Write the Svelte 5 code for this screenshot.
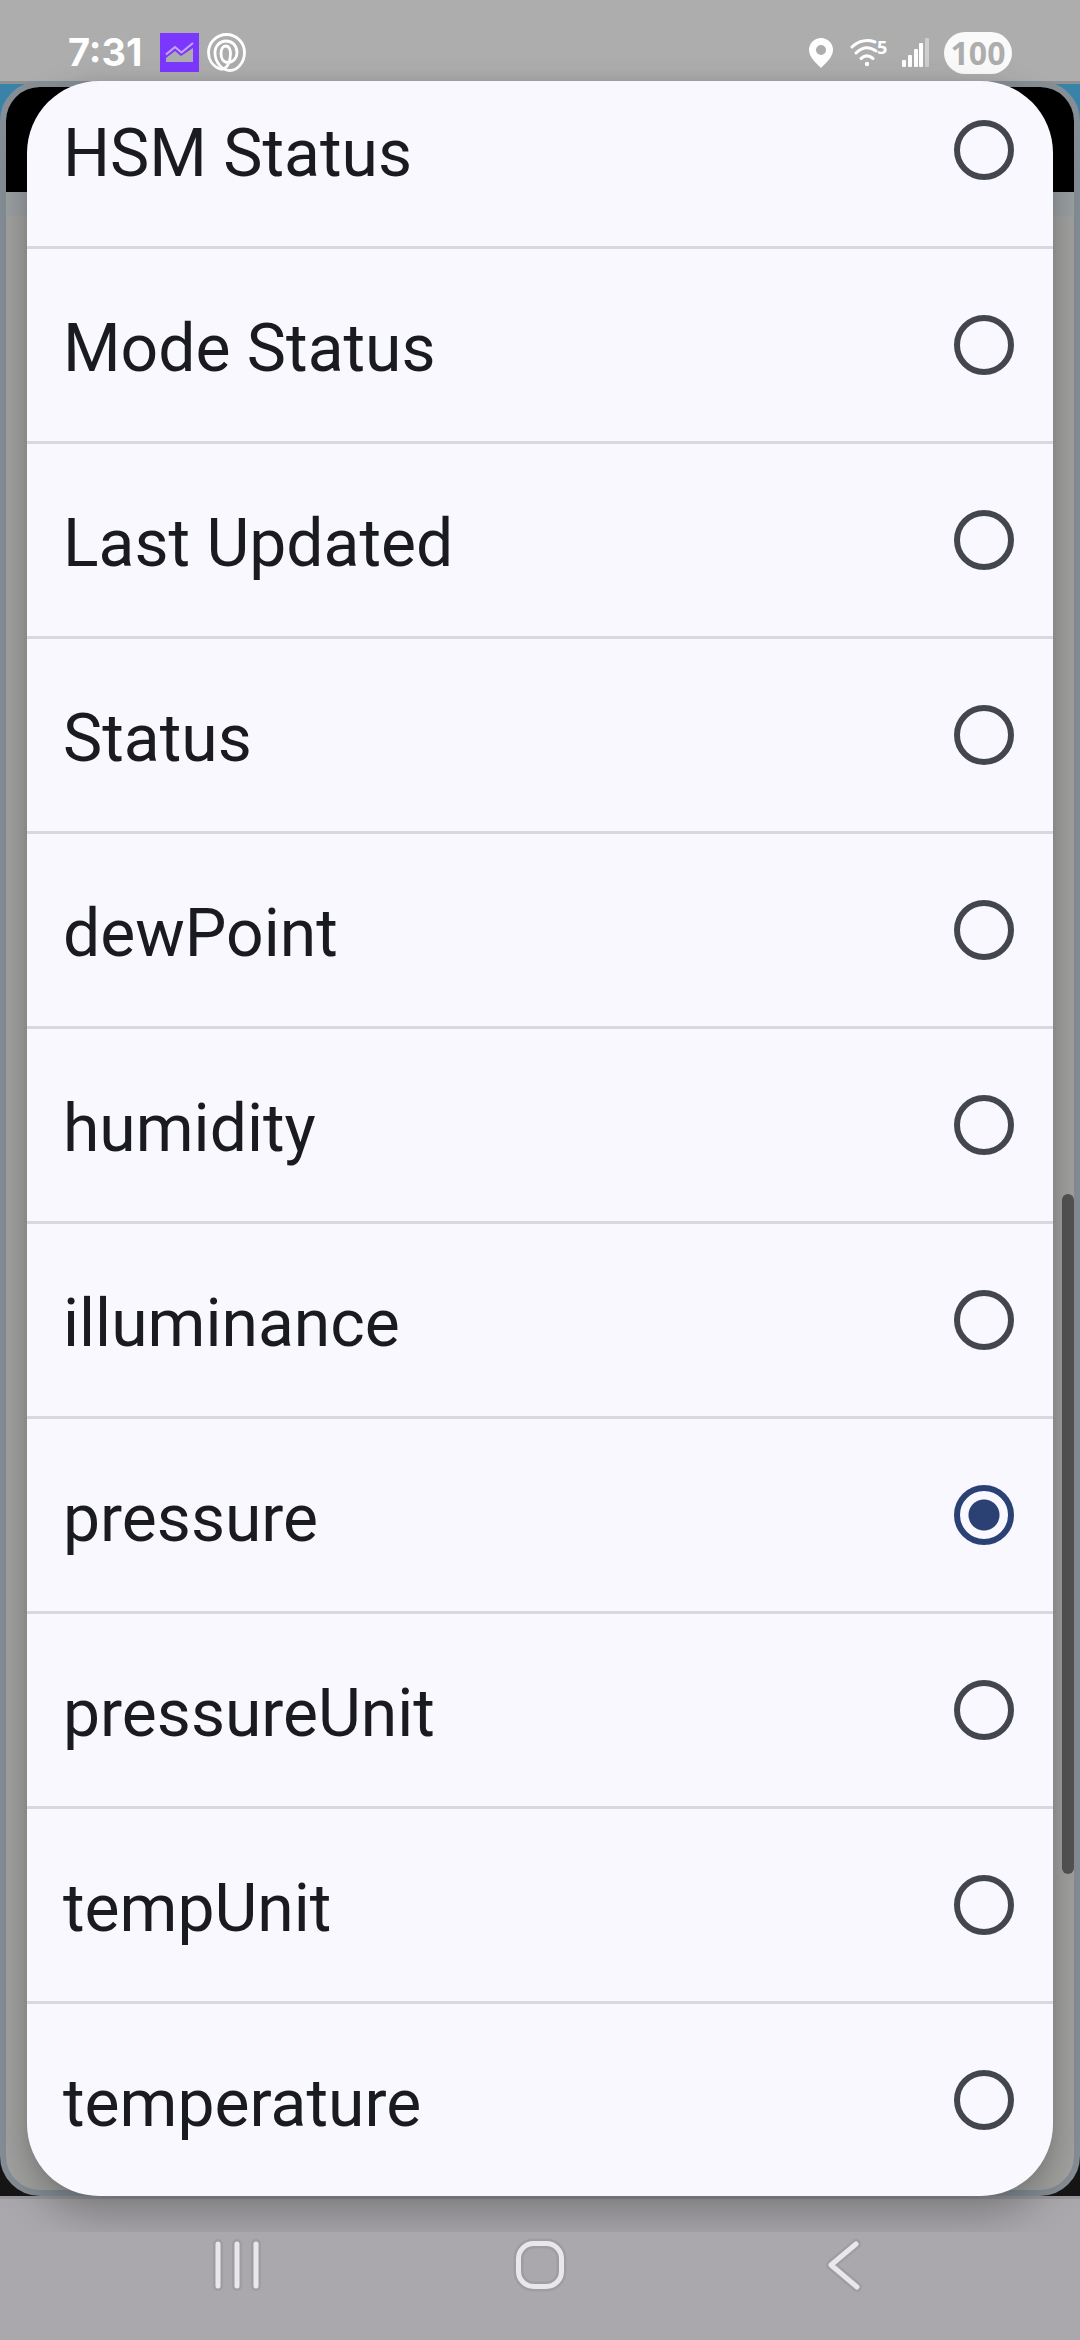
<script>
  const options = [
    'HSM Status',
    'Mode Status',
    'Last Updated',
    'Status',
    'dewPoint',
    'humidity',
    'illuminance',
    'pressure',
    'pressureUnit',
    'tempUnit',
    'temperature'
  ]

  let selected = $state('pressure')
</script>

<div class="screen">
  <header class="status">
    <div class="group">
      <span class="clock">7:31</span>
      <svg class="chart" width="39" height="39" viewBox="0 0 39 39">
        <rect width="39" height="39" fill="#7c37ff" />
        <path d="M6 29V25L15 18L21 23L33 15V29Z" fill="#adadad" />
        <path d="M6 21.5L15 14L21.5 19.5L33 10" fill="none" stroke="#c5a9ee" stroke-width="2" />
      </svg>
      <svg width="39" height="39" viewBox="0 0 39 39" fill="none" stroke="#fff" stroke-width="2.8">
        <path d="M13 36C5 33 1.5 26 1.5 19.500A18 18 0 0 1 37.500 19.500C37.500 30 30 37.500 23 37.500C14 37.500 8 28 8 20C8 12.500 13 8 19 8C25.500 8 30 13 30 19.500C30 25 26 29.500 21 29.500C16 29.500 14 25 14 20.500C14 16 16 13 18.700 13C22 13 23.500 17 23.500 21C23.500 28 20 37.500 13 36" />
      </svg>
    </div>
    <div class="group right">
      <svg class="pin" width="24" height="30" viewBox="0 0 24 30">
        <path fill="#fff" fill-rule="evenodd" d="M12 0A12 12 0 0 0 0 12C0 19 7 25 12 30C17 25 24 19 24 12A12 12 0 0 0 12 0ZM12 7A5 5 0 1 1 12 17A5 5 0 1 1 12 7Z" />
      </svg>
      <svg class="wifi" width="40" height="36" viewBox="0 -4 40 36" fill="none" stroke="#fff" stroke-width="3" stroke-linecap="round">
        <path d="M2 8C9 1 18 .5 25 3" />
        <path d="M6 14C12 8 19 7 26 12" />
        <path d="M11 19.500C15 16 19 16 23 19.500" />
        <circle cx="17" cy="25" r="2.200" fill="#fff" stroke="none" />
        <text x="27" y="15" class="band">5</text>
      </svg>
      <svg class="signal" width="28" height="30" viewBox="0 0 28 30" fill="#fff">
        <rect x="0" y="22" width="4" height="7" rx="1" />
        <rect x="6" y="17" width="4" height="12" rx="1" />
        <rect x="12" y="11" width="4" height="18" rx="1" />
        <rect x="17" y="5" width="4" height="24" rx="1" />
        <rect x="23" y="0" width="4" height="29" rx="1" opacity=".4" />
      </svg>
      <span class="battery">100</span>
    </div>
  </header>

  <div class="stage">
    <div class="page">
      <div class="page-header"></div>
      <div class="page-strip"></div>
      <div class="scrollbar"></div>
    </div>
    <div class="dialog">
      <div class="list" role="radiogroup" aria-label="Attribute">
        {#each options as option}
          <label class="option">
            <span>{option}</span>
            <input type="radio" name="attribute" value={option} bind:group={selected} />
          </label>
        {/each}
      </div>
    </div>
  </div>

  <nav class="navbar">
    <div class="buttons">
      <button aria-label="Recent apps">
        <svg width="60" height="60" viewBox="0 0 60 60" fill="none" stroke-linecap="round">
          <path class="halo" d="M11 9V51M30 9V51M49 9V51" />
          <path class="line" d="M11 9V51M30 9V51M49 9V51" />
        </svg>
      </button>
      <button aria-label="Home">
        <svg width="60" height="60" viewBox="0 0 60 60" fill="none">
          <rect class="halo" x="8.5" y="8.5" width="43" height="43" rx="15" />
          <rect class="line" x="8.5" y="8.5" width="43" height="43" rx="15" />
        </svg>
      </button>
      <button aria-label="Back">
        <svg width="60" height="60" viewBox="0 0 60 60" fill="none" stroke-linecap="round" stroke-linejoin="round">
          <path class="halo" d="M43 9L18 30L44 52" />
          <path class="line" d="M43 9L18 30L44 52" />
        </svg>
      </button>
    </div>
  </nav>
</div>

<style>
  :global(body) {
    margin: 0;
    background: #aaa8ac;
  }

  .screen {
    font-family: Roboto, sans-serif;
    display: flex;
    flex-direction: column;
    min-height: 100vh;
    overflow: hidden;
  }

  .status {
    display: flex;
    justify-content: space-between;
    box-sizing: border-box;
    height: 81px;
    padding: 24px 68px 0;
    background: #adadad;
    color: #fff;
  }

  .group {
    display: flex;
    align-items: center;
    height: 57px;
  }

  .clock {
    font: 700 38px/57px Inter, sans-serif;
  }

  .chart {
    margin: 0 8px 0 18px;
  }

  .wifi {
    margin: 0 12px 0 17px;
  }

  .band {
    font: 700 18px "Open Sans", sans-serif;
    fill: #fff;
    stroke: none;
  }

  .battery {
    margin-left: 14px;
    width: 68px;
    border-radius: 21px;
    background: #fafafa;
    color: #adadad;
    font: 700 32px/42px "Open Sans", sans-serif;
    text-align: center;
  }

  .stage {
    position: relative;
    padding: 0 27px;
    background: linear-gradient(#3a83a8 50%, #161616 50%);
  }

  /* dimmed page behind the dialog */
  .page {
    position: absolute;
    inset: 0;
    border: 6px solid #868e96;
    border-radius: 40px;
    background: #a3a3a2;
    overflow: hidden;
  }

  .stage::before {
    content: "";
    position: absolute;
    inset: 0 0 auto;
    height: 3px;
    background: #8f9193;
  }

  .page-header {
    height: 105px;
    background: #000;
  }

  .page-strip {
    height: 24px;
    background: #9da2a4;
  }

  .scrollbar {
    position: absolute;
    right: 0;
    top: 1107px;
    width: 12px;
    height: 680px;
    border-radius: 6px;
    background: #555;
  }

  .dialog {
    position: relative;
    overflow: hidden;
    border-radius: 72px;
    background: #f9f8ff;
    box-shadow: 0 18px 42px rgba(0, 0, 0, .28), 0 0 12px rgba(0, 0, 0, .06);
  }

  /* list is scrolled, first row is partly cut */
  .list {
    margin-top: -27px;
  }

  .option {
    display: flex;
    align-items: center;
    justify-content: space-between;
    height: 192px;
    padding: 0 39px 0 36px;
    border-bottom: 3px solid #d9d8df;
    color: #1a1b20;
    font-size: 66px;
    line-height: 78px;
    cursor: pointer;
  }

  .option:last-child {
    border-bottom: none;
  }

  .option span {
    padding-top: 8px;
  }

  input {
    appearance: none;
    box-sizing: border-box;
    width: 60px;
    height: 60px;
    margin: 0;
    border: 6px solid #44464e;
    border-radius: 50%;
  }

  input:checked {
    border-color: #2b4174;
    background: radial-gradient(circle, #2b4174 15px, transparent 16px);
  }

  .navbar {
    flex: 1;
    display: flex;
    border-top: 3px solid #98979b;
    padding-top: 33px;
    background: #aaa8ac;
  }

  .buttons {
    position: relative;
    flex: 1;
    display: flex;
    justify-content: space-between;
    padding: 3px 207px 0;
    background: #aaa8ac;
  }

  button {
    height: 60px;
    padding: 0;
    border: none;
    background: none;
    cursor: pointer;
  }

  .halo {
    stroke: #9f9da1;
    stroke-width: 10;
  }

  .line {
    stroke: #e8e7e9;
    stroke-width: 5;
  }
</style>
